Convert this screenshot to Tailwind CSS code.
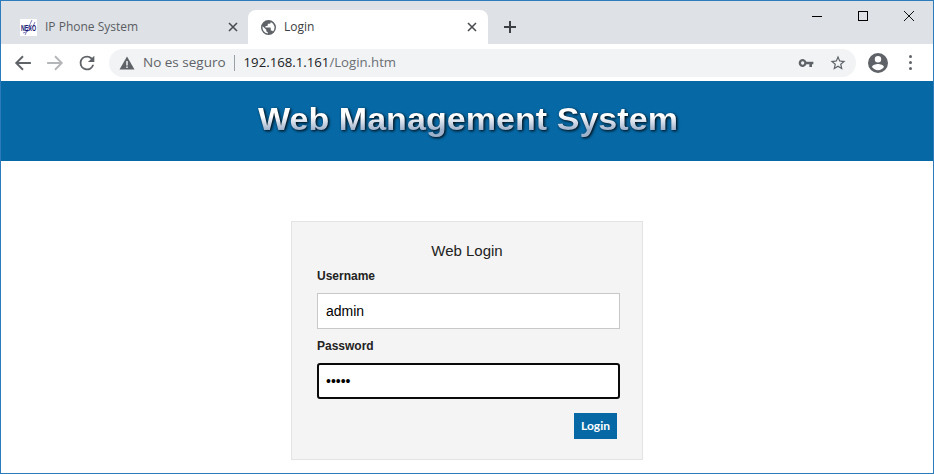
<!DOCTYPE html>
<html lang="en">
<head>
    <meta charset="UTF-8">
    <title>Login</title>
    <script src="https://cdn.jsdelivr.net/npm/@tailwindcss/browser@4"></script>
</head>
<body class="bg-white">
    <div class="w-[934px] h-[474px] overflow-hidden border border-[#2b7bbd] flex flex-col font-['Liberation_Sans',sans-serif]">
        <!-- tab strip -->
        <div class="h-[43px] shrink-0 bg-[#dee1e6] flex items-end pl-[7px] font-['Open_Sans',sans-serif] text-[12px]">
            <div class="w-[240px] h-[34px] flex items-center pl-[12px] pr-[10px] text-[#5a5d62]">
                <svg class="w-[17px] h-[17px] mr-[8px] overflow-visible" viewBox="0 0 17 17">
                    <rect width="17" height="17" fill="#fff"/>
                    <path d="M12 1 L5 16 M3 14 Q12 12 15 3" stroke="#7f7fc0" stroke-width="1" fill="none"/>
                    <text x="1" y="12" font-size="9" font-weight="700" font-family="Liberation Sans" textLength="15" lengthAdjust="spacingAndGlyphs" fill="#14146e">NEXO</text>
                </svg>
                <span>IP Phone System</span>
                <svg class="ml-auto w-[10px] h-[10px]" viewBox="0 0 10 10"><path d="M1 1 L9 9 M9 1 L1 9" stroke="#4a4d51" stroke-width="1.6"/></svg>
            </div>
            <div class="w-[240px] h-[34px] bg-white rounded-t-[8px] flex items-center pl-[13px] pr-[11px] text-[#3c4043]">
                <svg class="w-[15px] h-[15px] mr-[8px]" viewBox="2 2 20 20" fill="#5f6368"><path d="M12 2a10 10 0 1 0 0 20 10 10 0 0 0 0-20zm-1 17.9A8 8 0 0 1 4.2 10.2L9 15v1a2 2 0 0 0 2 2v1.9zm6.9-2.5A2 2 0 0 0 16 16h-1v-3a1 1 0 0 0-1-1H8v-2h2a1 1 0 0 0 1-1V7h2a2 2 0 0 0 2-2v-.4a8 8 0 0 1 2.9 12.8z"/></svg>
                <span>Login</span>
                <svg class="ml-auto w-[10px] h-[10px]" viewBox="0 0 10 10"><path d="M1 1 L9 9 M9 1 L1 9" stroke="#4a4d51" stroke-width="1.6"/></svg>
            </div>
            <svg class="w-[12px] h-[12px] ml-[16px] mb-[11px]" viewBox="0 0 12 12"><path d="M6 0 V12 M0 6 H12" stroke="#3c4043" stroke-width="2"/></svg>
            <div class="ml-auto self-start flex items-center h-[30px] pr-[1px]">
                <div class="w-[46px] h-[30px] flex items-center justify-center"><div class="w-[10px] h-px bg-black"></div></div>
                <div class="w-[46px] h-[30px] flex items-center justify-center"><div class="w-[10px] h-[10px] border border-black"></div></div>
                <div class="w-[46px] h-[30px] flex items-center justify-center"><svg class="w-[10px] h-[10px]" viewBox="0 0 10 10"><path d="M0 0 L10 10 M10 0 L0 10" stroke="#111" stroke-width="1"/></svg></div>
            </div>
        </div>
        <!-- toolbar -->
        <div class="h-[37px] shrink-0 bg-white flex items-center pl-[13px] font-['Open_Sans',sans-serif] text-[13.5px]">
            <svg class="w-[18px] h-[18px]" viewBox="0 0 16 16"><path d="M15 8 H2 M8 2 L2 8 L8 14" stroke="#5f6368" stroke-width="1.7" fill="none"/></svg>
            <svg class="w-[18px] h-[18px] ml-[14px]" viewBox="0 0 16 16"><path d="M1 8 H14 M8 2 L14 8 L8 14" stroke="#b4b6b9" stroke-width="1.7" fill="none"/></svg>
            <svg class="w-[22px] h-[22px] ml-[12px]" viewBox="0 0 24 24" fill="#5f6368"><path d="M17.65 6.35A7.96 7.96 0 0 0 12 4a8 8 0 1 0 7.73 10h-2.08A6 6 0 1 1 12 6c1.66 0 3.14.69 4.22 1.78L13 11h7V4l-2.35 2.35z"/></svg>
            <div class="ml-[11px] w-[747px] h-[28px] rounded-full bg-[#f1f3f4] flex items-center pl-[10px] pr-[9px]">
                <svg class="w-[16px] h-[16px]" viewBox="0 0 16 16"><path d="M8 1.5 L15.5 14.5 H0.5 Z" fill="#5f6368"/><path d="M8 6 V10.5 M8 11.5 V13" stroke="#f1f3f4" stroke-width="1.5"/></svg>
                <span class="ml-[8px] text-[#5f6368]">No es seguro</span>
                <div class="w-px h-[16px] bg-[#9aa0a6] ml-[8px]"></div>
                <span class="ml-[9px] text-[13.2px] text-[#202124]">192.168.1.161<span class="text-[#6b6f74]">/Login.htm</span></span>
                <svg class="ml-auto w-[16px] h-[16px]" viewBox="0 0 24 24" fill="#5f6368"><path d="M12.65 10A6 6 0 1 0 12.65 14H17v4h4v-4h2v-4H12.65zM7 14.5a2.5 2.5 0 1 1 0-5 2.5 2.5 0 0 1 0 5z"/></svg>
                <svg class="ml-[15px] w-[18px] h-[18px]" viewBox="0 0 24 24" fill="#5f6368"><path d="M22 9.24l-7.19-.62L12 2 9.19 8.63 2 9.24l5.46 4.73L5.82 21 12 17.27 18.18 21l-1.63-7.03L22 9.24zM12 15.4l-3.76 2.27 1-4.28-3.32-2.88 4.38-.38L12 6.1l1.71 4.04 4.38.38-3.32 2.88 1 4.28L12 15.4z"/></svg>
            </div>
            <svg class="ml-[12px] w-[20px] h-[20px]" viewBox="0 0 20 20" fill="#5f6368"><path d="M10 0a10 10 0 1 0 0 20 10 10 0 0 0 0-20zm0 3a3.2 3.2 0 1 1 0 6.4A3.2 3.2 0 0 1 10 3zm0 14.2a7.4 7.4 0 0 1-6-3.1c0-2 4-3.1 6-3.1s6 1.1 6 3.1a7.4 7.4 0 0 1-6 3.1z"/></svg>
            <div class="ml-[21px] flex flex-col gap-[3px]">
                <div class="w-[3px] h-[3px] rounded-full bg-[#5f6368]"></div>
                <div class="w-[3px] h-[3px] rounded-full bg-[#5f6368]"></div>
                <div class="w-[3px] h-[3px] rounded-full bg-[#5f6368]"></div>
            </div>
        </div>
        <!-- banner -->
        <div class="h-[80px] shrink-0 bg-[#0669a6] flex items-center justify-center">
            <h1 class="text-[31px] font-bold leading-[40px] scale-x-[1.1] ml-[2px] mb-[3px] text-transparent bg-clip-text bg-gradient-to-b from-white from-40% to-[#9fb2cc] to-75% drop-shadow-[1px_1px_1.5px_rgba(0,0,0,1)]">Web Management System</h1>
        </div>
        <!-- login -->
        <div class="flex-1 pt-[60px] flex justify-center">
            <form class="w-[352px] h-[239px] bg-[#f4f4f4] border border-[#e3e3e3] px-[25px] pt-[19px]">
                <p class="text-center text-[15px] leading-[20px] text-[#222]">Web Login</p>
                <label class="block mt-[8px] text-[12px] leading-[14px] font-bold text-[#222]">Username</label>
                <input type="text" value="admin" class="block mt-[10px] w-[303px] h-[36px] bg-white border border-[#c8c8c8] px-[8px] text-[14px] text-black">
                <label class="block mt-[10px] text-[12px] leading-[14px] font-bold text-[#222]">Password</label>
                <input type="password" value="admin" class="block mt-[10px] w-[303px] h-[36px] bg-white border-2 border-[#0a0a0a] rounded-[3px] px-[7px] text-[14px] text-black">
                <div class="flex justify-end mt-[14px]">
                    <button type="button" class="w-[43px] h-[26px] bg-[#0669a6] text-white text-[12px] font-bold font-['Lato',sans-serif]">Login</button>
                </div>
            </form>
        </div>
    </div>
</body>
</html>
